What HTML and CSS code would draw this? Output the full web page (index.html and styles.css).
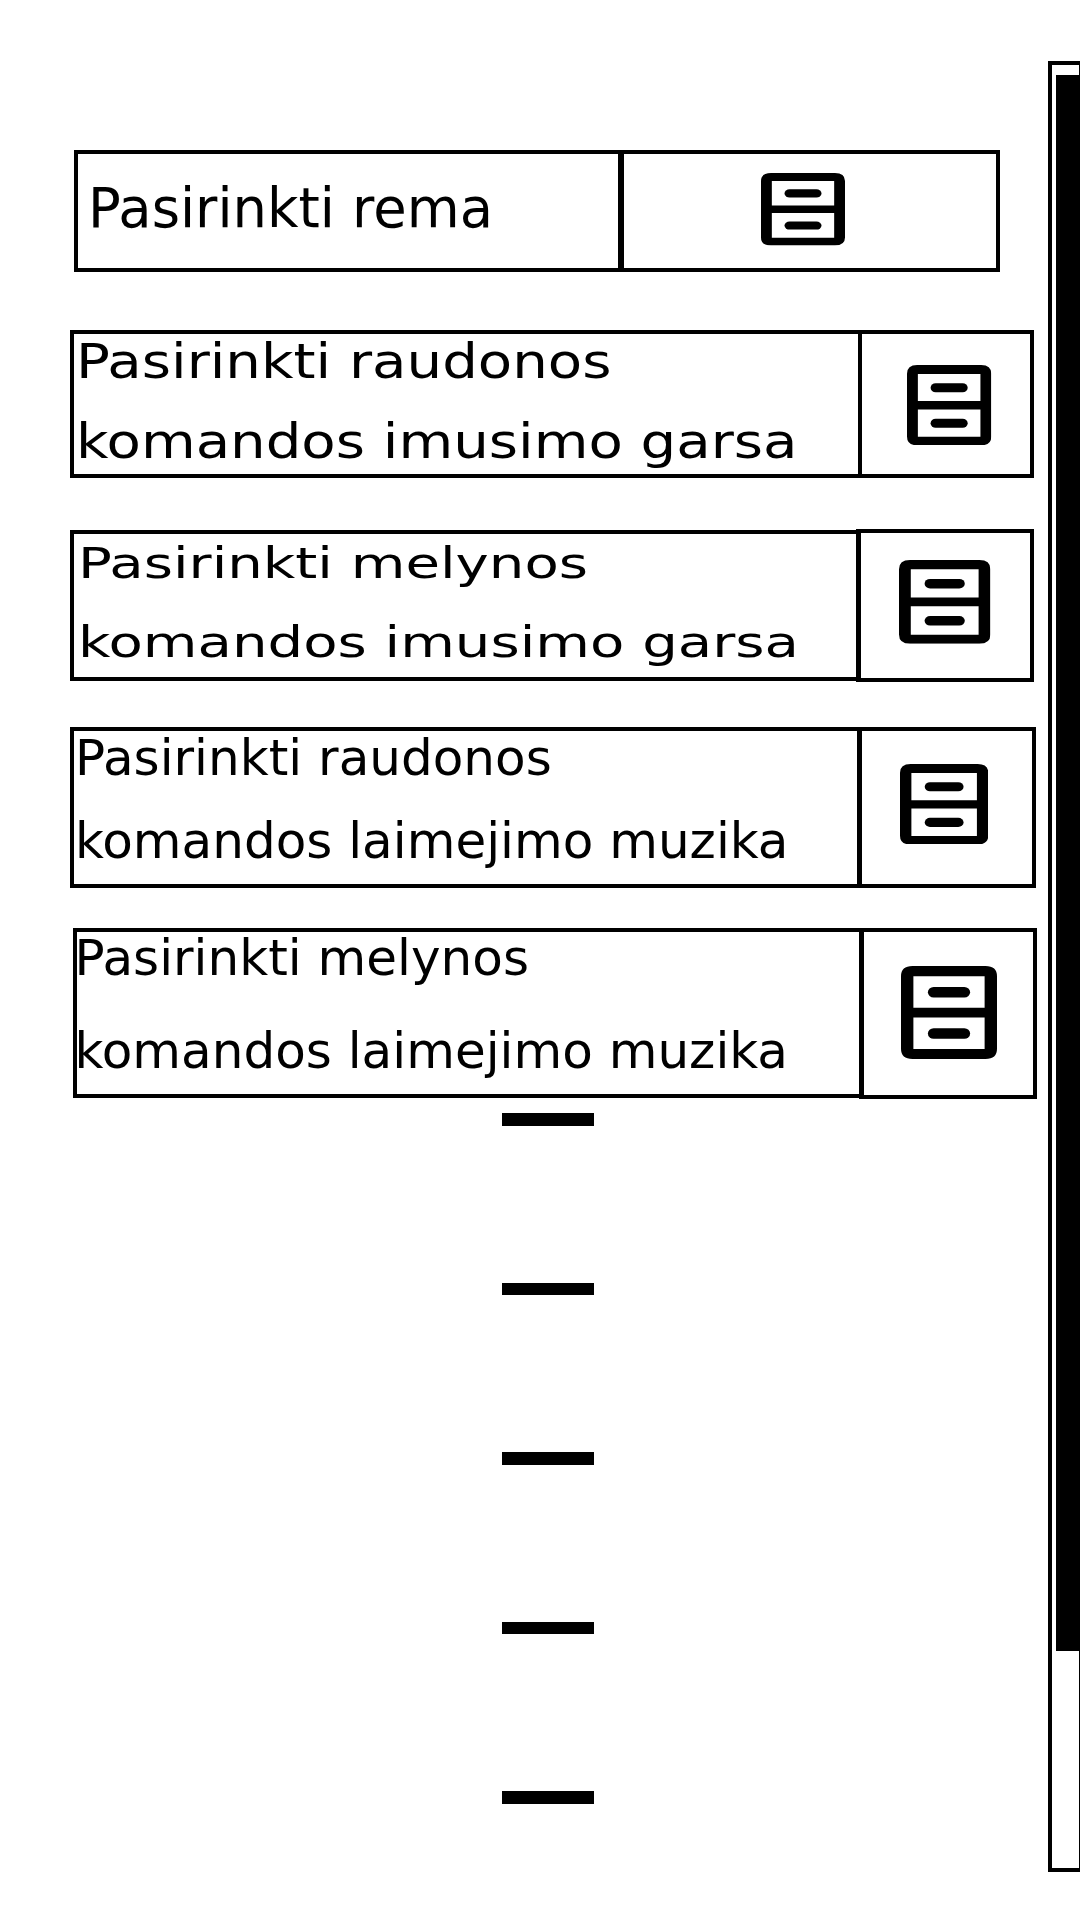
FILE: index.html
```html
<!DOCTYPE html>
<html lang="lt">
<head>
<meta charset="utf-8">
<title>Nustatymai</title>
<link rel="stylesheet" href="styles.css">
</head>
<body>
<svg class="defs" aria-hidden="true">
  <symbol id="drawer" viewBox="0 0 100 100" preserveAspectRatio="none">
    <path fill-rule="evenodd" d="M12 0H88Q100 0 100 11V89Q100 100 88 100H12Q0 100 0 89V11Q0 0 12 0ZM12.9 11.1V44.9H87.1V11.1ZM12.9 55.3V89.3H87.1V55.3Z"/>
    <rect x="28" y="22.6" width="44" height="11.3" rx="6" ry="5.65"/>
    <rect x="28" y="66.9" width="44" height="11.3" rx="6" ry="5.65"/>
  </symbol>
</svg>
<div class="screen">
  <main class="content">
    <section class="row row-frame">
      <div class="label"><p>Pasirinkti rema</p></div>
      <a class="pick"><svg><use href="#drawer"/></svg></a>
    </section>
    <section class="row row-red-hit">
      <div class="label"><p>Pasirinkti raudonos</p><p>komandos imusimo garsa</p></div>
      <a class="pick"><svg><use href="#drawer"/></svg></a>
    </section>
    <section class="row row-blue-hit">
      <div class="label"><p>Pasirinkti melynos</p><p>komandos imusimo garsa</p></div>
      <a class="pick"><svg><use href="#drawer"/></svg></a>
    </section>
    <section class="row row-red-win">
      <div class="label"><p>Pasirinkti raudonos</p><p>komandos laimejimo muzika</p></div>
      <a class="pick"><svg><use href="#drawer"/></svg></a>
    </section>
    <section class="row row-blue-win">
      <div class="label"><p>Pasirinkti melynos</p><p>komandos laimejimo muzika</p></div>
      <a class="pick"><svg><use href="#drawer"/></svg></a>
    </section>
    <div class="dashes"><i></i><i></i><i></i><i></i><i></i></div>
  </main>
  <aside class="scrollbar"><div class="thumb"></div></aside>
</div>
</body>
</html>
```
FILE: styles.css
```css
* { box-sizing: border-box; }
body { margin: 0; background: #fff; color: #000; font-family: "DejaVu Sans", sans-serif; }
.defs { position: absolute; width: 0; height: 0; }
.screen { display: flex; width: 1080px; height: 1920px; overflow: hidden; }
.content { width: 1048px; padding-top: 150px; }

.row { display: flex; align-items: flex-start; }
.label { flex: none; border: 4px solid #000; border-right: 0; }
.label p { margin: 0; white-space: nowrap; transform-origin: 0 0; }
.pick { flex: none; display: block; border: 4px solid #000; }
.pick svg { display: block; fill: #000; }

.row-frame { margin-left: 74px; height: 122px; }
.row-frame .label { width: 544px; height: 122px; padding: 18px 0 0 10px; }
.row-frame p { font-size: 54.3px; line-height: 74px; transform: scaleX(1.001); }
.row-frame .pick { width: 382px; height: 122px; border-left-width: 6px; padding: 19.4px 0 0 137px; }
.row-frame svg { width: 84px; height: 72.4px; }

.row-red-hit { margin: 58px 0 0 70px; height: 148px; }
.row-red-hit .label { width: 788px; height: 148px; padding: 0 0 0 2px; }
.row-red-hit p { margin-top: -11.6px; margin-bottom: 11.6px; font-size: 48.4px; line-height: 79.7px; transform: scaleX(1.161); }
.row-red-hit .pick { width: 176px; height: 148px; padding: 31px 0 0 45.4px; }
.row-red-hit svg { width: 84.3px; height: 80.3px; }

.row-blue-hit { margin: 51px 0 0 70px; height: 153px; }
.row-blue-hit .label { margin-top: 1px; width: 786px; height: 151px; padding: 0 0 0 3.6px; }
.row-blue-hit p { margin-top: -10px; margin-bottom: 10px; font-size: 42.7px; line-height: 79.3px; transform: scaleX(1.315); }
.row-blue-hit .pick { width: 178px; height: 152.5px; border-left-width: 5px; padding: 27px 0 0 38.3px; }
.row-blue-hit svg { width: 91.4px; height: 83.8px; }

.row-red-win { margin: 45px 0 0 70px; height: 161px; }
.row-red-win .label { width: 787px; height: 161px; padding: 0 0 0 .5px; }
.row-red-win p { margin-top: -14px; margin-bottom: 14px; font-size: 49.2px; line-height: 83px; transform: scaleX(1.017); }
.row-red-win .pick { width: 179px; height: 161px; border-left-width: 5px; padding: 32.7px 0 0 37.7px; }
.row-red-win svg { width: 88.3px; height: 80.5px; }

.row-blue-win { margin: 40px 0 0 73px; height: 171px; }
.row-blue-win .label { width: 786px; height: 170px; padding: 0; }
.row-blue-win p { margin-top: -19.8px; margin-bottom: 19.8px; font-size: 49.2px; line-height: 92.3px; transform: translateX(-2.5px) scaleX(1.017); }
.row-blue-win .pick { width: 178px; height: 171px; border-left-width: 5px; padding: 34px 0 0 37.3px; }
.row-blue-win svg { width: 96px; height: 93px; }

.dashes { display: flex; flex-direction: column; gap: 157px; margin: 14px 0 0 502px; }
.dashes i { display: block; width: 92px; height: 12.6px; background: #000; }

.scrollbar { width: 32px; height: 1811px; margin-top: 61px; border: 4px solid #000; border-right-width: 1px; padding: 10px 0 0 4px; }
.thumb { height: 1576px; background: #000; }
```
